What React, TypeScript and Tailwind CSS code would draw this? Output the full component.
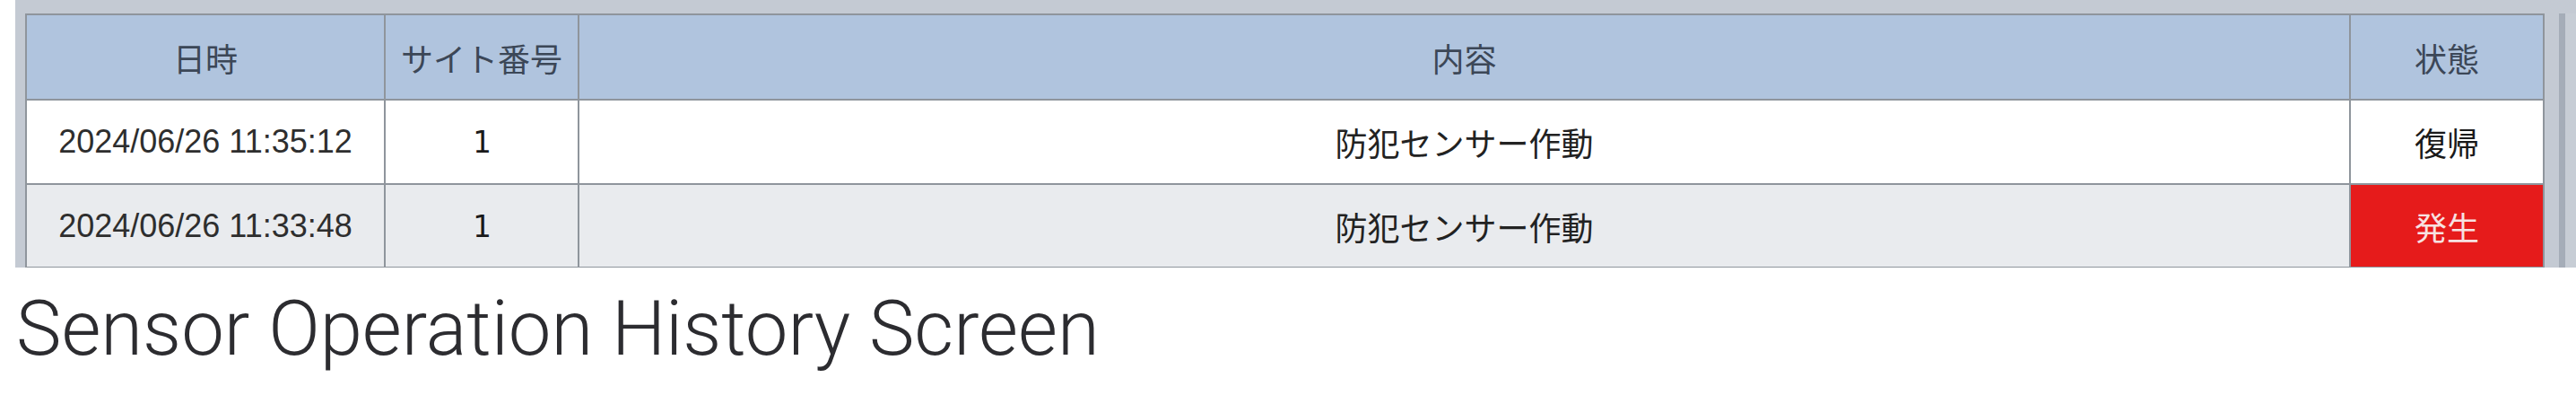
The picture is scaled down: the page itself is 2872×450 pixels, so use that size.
import React from "react";

const GRID = "grid grid-cols-[398px_214px_1973px_214px] gap-x-[2px]";
const JP = "font-['Noto_Sans_CJK_JP','Noto_Sans',sans-serif]";

type Row = { date: string; site: string; content: string; state: string; alert: boolean; bg: string };

const rows: Row[] = [
  { date: "2024/06/26 11:35:12", site: "1", content: "防犯センサー作動", state: "復帰", alert: false, bg: "bg-white" },
  { date: "2024/06/26 11:33:48", site: "1", content: "防犯センサー作動", state: "発生", alert: true, bg: "bg-[#e9ebee]" },
];

function HeaderCell({ children }: { children: React.ReactNode }) {
  return (
    <div className={`bg-[#b0c4de] flex items-center justify-center text-[36px] leading-none text-[#3c4757] ${JP}`}>
      {children}
    </div>
  );
}

export default function App() {
  return (
    <div className="w-[2872px] h-[450px] bg-white overflow-hidden flex flex-col">
      <div className="flex h-[298px] shrink-0 overflow-hidden">
        <div className="w-[17px] shrink-0 bg-white" />
        <div className="flex-1 flex bg-[#c4cad3] pt-[15px] pl-[11px]">
          <div className="w-[2809px] shrink-0 flex flex-col gap-y-[2px] border-x-2 border-t-2 border-[#8f959c] bg-[#8f959c]">
            <div className={`${GRID} h-[93px] shrink-0`}>
              <HeaderCell>日時</HeaderCell>
              <HeaderCell>サイト番号</HeaderCell>
              <HeaderCell>内容</HeaderCell>
              <HeaderCell>状態</HeaderCell>
            </div>
            {rows.map((r, i) => (
              <div key={i} className={`${GRID} ${i === 0 ? "h-[92px]" : "h-[91px]"} shrink-0`}>
                <div className={`${r.bg} flex items-center justify-center font-['Liberation_Sans',Arial,sans-serif] text-[36px] leading-none text-[#2e2e2e]`}>
                  {r.date}
                </div>
                <div className={`${r.bg} flex items-center justify-center font-['DejaVu_Sans_Mono',monospace] text-[34px] leading-none text-[#1a1a1a]`}>
                  {r.site}
                </div>
                <div className={`${r.bg} flex items-center justify-center text-[36px] leading-none text-[#222] ${JP}`}>
                  {r.content}
                </div>
                <div
                  className={`${r.alert ? "bg-[#e61b1b] text-[#f7e1e1]" : "bg-white text-[#1a1a1a]"} flex items-center justify-center text-[36px] leading-none ${JP}`}
                >
                  {r.state}
                </div>
              </div>
            ))}
            <div className="h-[1px] shrink-0 bg-[#cdd0d4]" />
          </div>
          <div className="flex-1" />
          <div className="w-[7px] shrink-0 bg-[#a5adb8]" />
          <div className="w-[12px] shrink-0 bg-[#c7cdd5]" />
        </div>
      </div>
      <div className="pl-[18px] pt-[26px]">
        <div className="font-['Roboto','Liberation_Sans',sans-serif] font-light text-[85px] leading-none text-[#2c2c30] whitespace-nowrap">
          Sensor Operation History Screen
        </div>
      </div>
    </div>
  );
}
